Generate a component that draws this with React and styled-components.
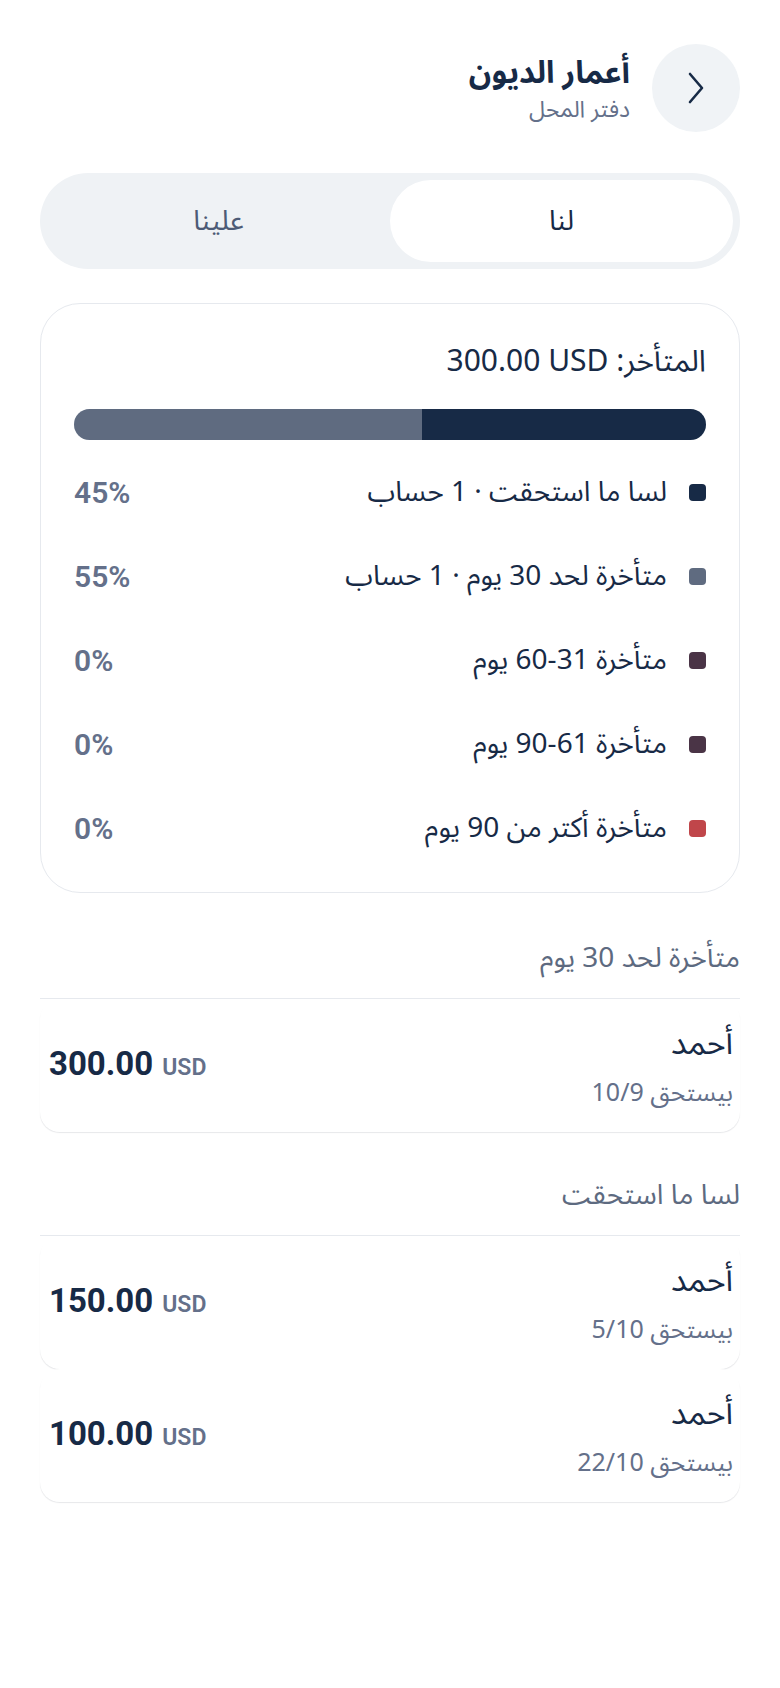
import React, { useState } from "react";
import styled, { createGlobalStyle } from "styled-components";

const navy = "#172a46";
const slate = "#64708a";
const line = "#e6e9ee";
const arabic = `"Noto Sans Arabic", "Noto Kufi Arabic", "DejaVu Sans", "Noto Sans", sans-serif`;
const latin = `Roboto, "Noto Sans", "Liberation Sans", sans-serif`;

const GlobalStyle = createGlobalStyle`
  * { box-sizing: border-box; }
  body {
    margin: 0;
    background: #ffffff;
    font-family: ${arabic};
    color: ${navy};
  }
`;

const buckets = [
  { label: "لسا ما استحقت · 1 حساب", pct: 45, color: "#172a46" },
  { label: "متأخرة لحد 30 يوم · 1 حساب", pct: 55, color: "#5f6b80" },
  { label: "متأخرة 31-60 يوم", pct: 0, color: "#4a3446" },
  { label: "متأخرة 61-90 يوم", pct: 0, color: "#4a3446" },
  { label: "متأخرة أكتر من 90 يوم", pct: 0, color: "#c0464a" },
];

const sections = [
  {
    title: "متأخرة لحد 30 يوم",
    rows: [{ name: "أحمد", due: "بيستحق 10/9", amount: "300.00" }],
  },
  {
    title: "لسا ما استحقت",
    rows: [
      { name: "أحمد", due: "بيستحق 5/10", amount: "150.00" },
      { name: "أحمد", due: "بيستحق 22/10", amount: "100.00" },
    ],
  },
];

export default function App() {
  const [tab, setTab] = useState("us");
  return (
    <>
      <GlobalStyle />
      <Page dir="rtl">
        <Header>
          <BackButton aria-label="رجوع">
            <svg width="16" height="32" viewBox="0 0 16 32" fill="none">
              <path d="M2 2 L14 16 L2 30" stroke={navy} strokeWidth="2.6" strokeLinecap="round" strokeLinejoin="round" />
            </svg>
          </BackButton>
          <TitleBlock>
            <Title>أعمار الديون</Title>
            <Subtitle>دفتر المحل</Subtitle>
          </TitleBlock>
        </Header>

        <Segmented>
          <Segment active={tab === "us"} onClick={() => setTab("us")}>لنا</Segment>
          <Segment active={tab === "them"} onClick={() => setTab("them")}>علينا</Segment>
        </Segmented>

        <Card>
          <CardTitle>المتأخر: <span dir="ltr">300.00 USD</span></CardTitle>
          <Bar>
            {buckets.filter((b) => b.pct > 0).map((b) => (
              <BarPart key={b.label} color={b.color} style={{ width: `${b.pct}%` }} />
            ))}
          </Bar>
          <Legend>
            {buckets.map((b) => (
              <LegendRow key={b.label}>
                <Swatch color={b.color} />
                <LegendLabel>{b.label}</LegendLabel>
                <Percent>{b.pct}%</Percent>
              </LegendRow>
            ))}
          </Legend>
        </Card>

        {sections.map((s) => (
          <Section key={s.title}>
            <SectionTitle>{s.title}</SectionTitle>
            {s.rows.map((r, i) => (
              <DebtRow key={i}>
                <Person>
                  <Name>{r.name}</Name>
                  <Due>{r.due}</Due>
                </Person>
                <Amount dir="ltr">
                  {r.amount}
                  <Currency>USD</Currency>
                </Amount>
              </DebtRow>
            ))}
          </Section>
        ))}
      </Page>
    </>
  );
}

const Page = styled.div`
  width: 780px;
  min-height: 1688px;
  padding: 44px 40px 60px;
  display: flex;
  flex-direction: column;
`;

const Header = styled.header`
  display: flex;
  align-items: center;
  gap: 22px;
`;

const BackButton = styled.button`
  width: 88px;
  height: 88px;
  border-radius: 50%;
  border: none;
  background: #f0f3f6;
  display: flex;
  align-items: center;
  justify-content: center;
  padding: 0;
  cursor: pointer;
`;

const TitleBlock = styled.div`
  display: flex;
  flex-direction: column;
  gap: 4px;
  margin-top: 2px;
`;

const Title = styled.h1`
  margin: 0;
  font-size: 31px;
  font-weight: 700;
  line-height: 38px;
  color: ${navy};
`;

const Subtitle = styled.div`
  font-size: 23px;
  line-height: 28px;
  color: ${slate};
`;

const Segmented = styled.div`
  margin-top: 41px;
  height: 96px;
  padding: 7px;
  border-radius: 48px;
  background: #eff2f5;
  display: flex;
`;

const Segment = styled.button`
  flex: 1;
  border: none;
  border-radius: 41px;
  font-family: ${arabic};
  font-size: 28px;
  cursor: pointer;
  background: ${(p) => (p.active ? "#ffffff" : "transparent")};
  color: ${(p) => (p.active ? navy : "#4d5b76")};
`;

const Card = styled.section`
  margin-top: 34px;
  border: 1.5px solid ${line};
  border-radius: 40px;
  padding: 34px 33px 22px;
`;

const CardTitle = styled.div`
  font-size: 30px;
  line-height: 48px;
  color: ${navy};
`;

const Bar = styled.div`
  margin-top: 23px;
  height: 31px;
  border-radius: 16px;
  overflow: hidden;
  display: flex;
  background: #eef1f4;
`;

const BarPart = styled.div`
  height: 100%;
  background: ${(p) => p.color};
`;

const Legend = styled.div`
  margin-top: 10px;
  display: flex;
  flex-direction: column;
`;

const LegendRow = styled.div`
  height: 84px;
  display: flex;
  align-items: center;
`;

const Swatch = styled.span`
  width: 17px;
  height: 17px;
  border-radius: 4px;
  background: ${(p) => p.color};
  flex-shrink: 0;
`;

const LegendLabel = styled.span`
  margin-right: 22px;
  flex: 1;
  font-size: 28px;
  color: ${navy};
`;

const Percent = styled.span`
  font-family: ${latin};
  font-weight: 600;
  font-size: 30px;
  color: ${slate};
`;

const Section = styled.section`
  margin-top: 46px;
  display: flex;
  flex-direction: column;
  & + & {
    margin-top: 44px;
  }
`;

const SectionTitle = styled.h2`
  margin: 0;
  padding-bottom: 19px;
  border-bottom: 1.5px solid ${line};
  font-size: 28px;
  font-weight: 400;
  line-height: 40px;
  color: #5d6a80;
`;

const DebtRow = styled.div`
  display: flex;
  align-items: center;
  justify-content: space-between;
  padding: 25px 7px 23px 9px;
  border-radius: 20px;
  background: #ffffff;
  box-shadow: 0 1.5px 1px -0.5px rgba(20, 30, 50, 0.1);
`;

const Person = styled.div`
  display: flex;
  flex-direction: column;
  gap: 13px;
`;

const Name = styled.div`
  font-size: 32px;
  line-height: 40px;
  color: ${navy};
`;

const Due = styled.div`
  font-size: 25px;
  line-height: 32px;
  color: ${slate};
`;

const Amount = styled.div`
  font-family: ${latin};
  font-size: 33px;
  font-weight: 700;
  color: ${navy};
  display: flex;
  align-items: baseline;
  gap: 9px;
  margin-bottom: 6px;
`;

const Currency = styled.span`
  font-size: 23px;
  font-weight: 600;
  color: ${slate};
`;
